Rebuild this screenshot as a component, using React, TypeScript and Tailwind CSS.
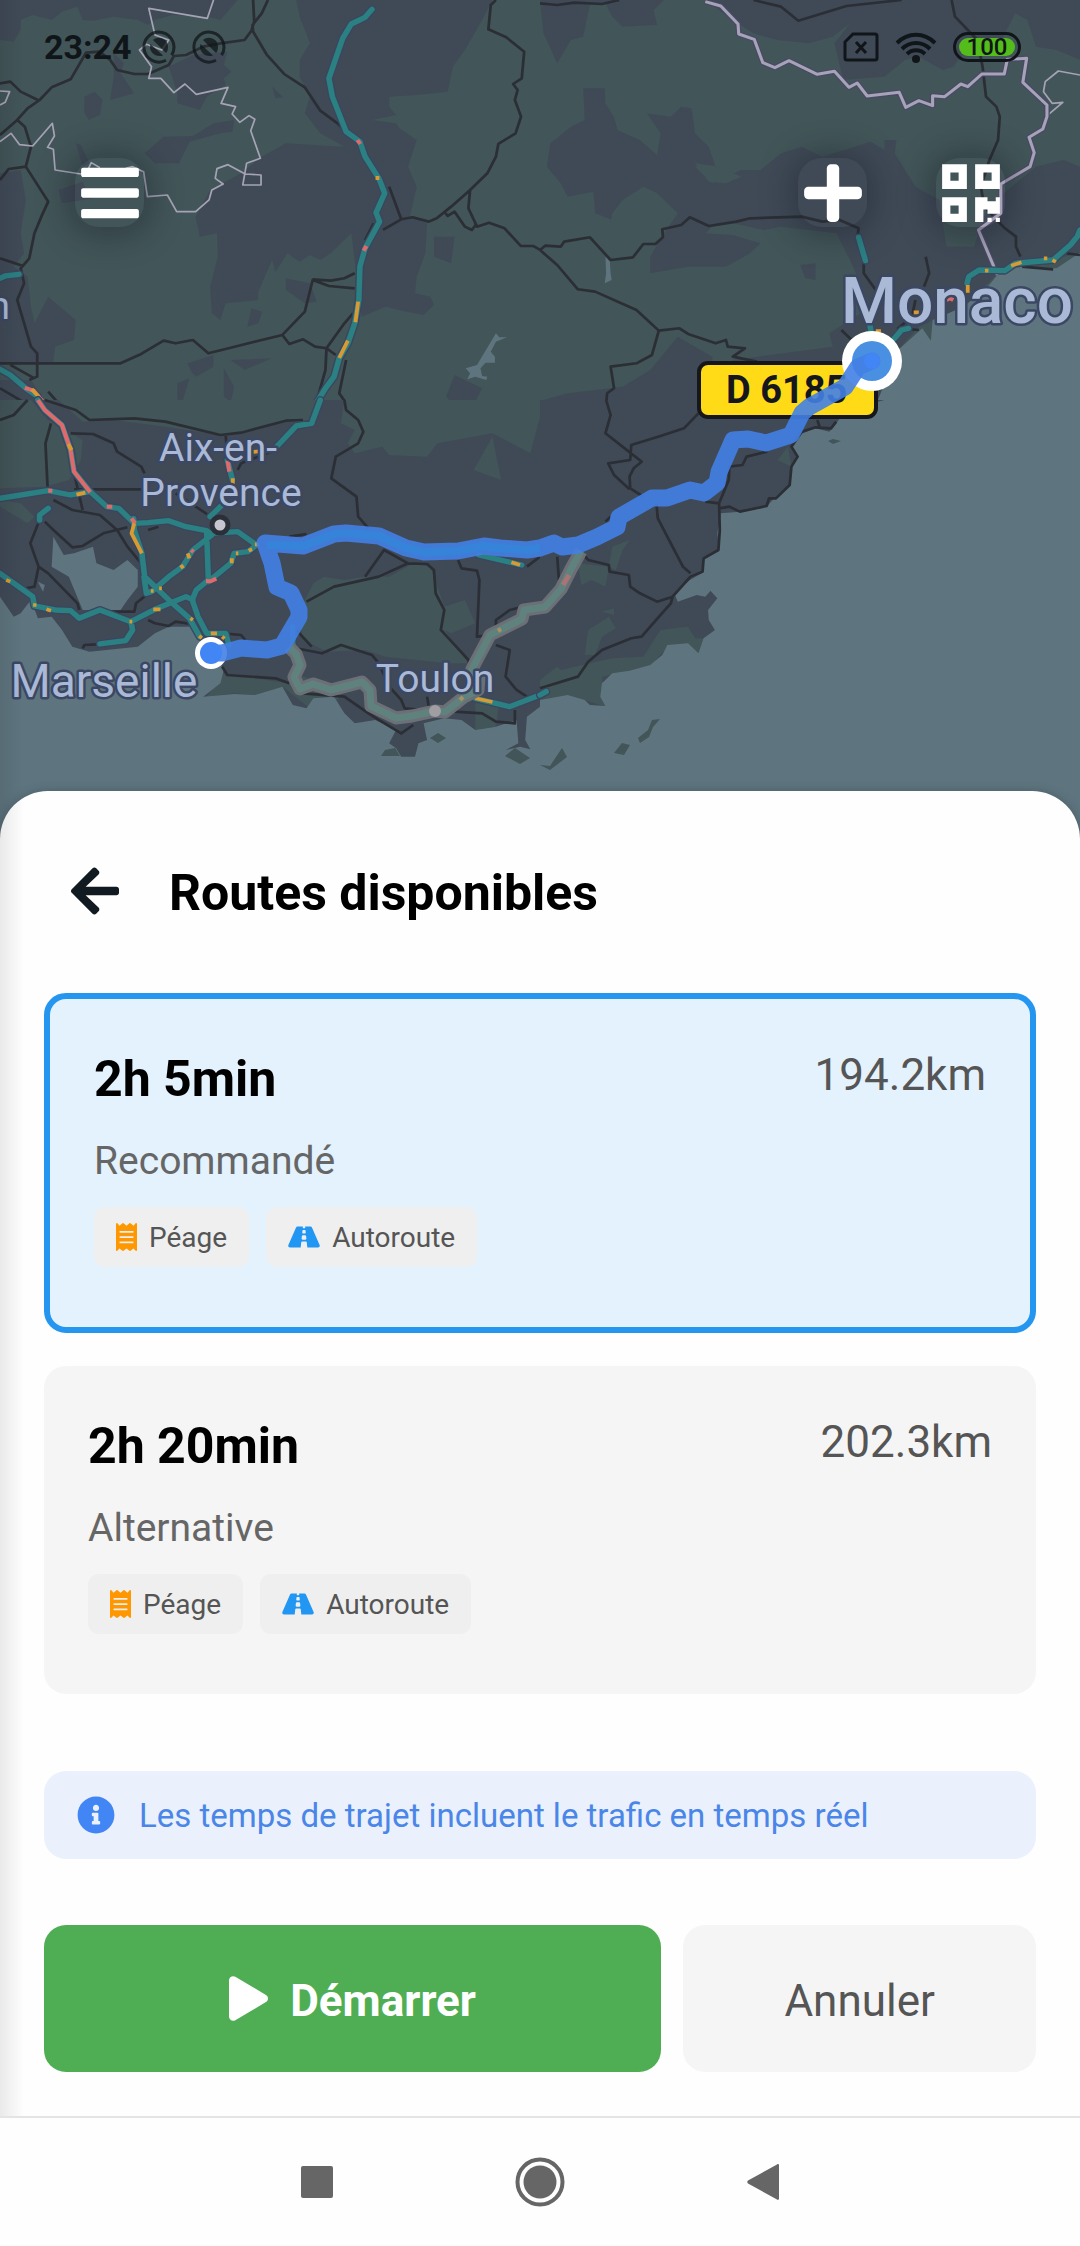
import React from "react";
import {
  FaArrowLeft,
  FaBars,
  FaInfoCircle,
  FaPlay,
  FaPlus,
  FaQrcode,
  FaReceipt,
  FaRoad,
} from "react-icons/fa";

type Route = { duration: string; distance: string; label: string };

const routes: Route[] = [
  { duration: "2h 5min", distance: "194.2km", label: "Recommandé" },
  { duration: "2h 20min", distance: "202.3km", label: "Alternative" },
];

const LAND = "#404a57";
const FOREST = "#425558";
const WATER = "#5e757f";
const ROAD = "#2b2f35";
const TEAL = "#2b8082";
const ORANGE = "#d99a33";
const RED = "#e0696c";
const BORDER = "#a5a3b5";

type TileProps = {
  x: number;
  y: number;
  base: string;
  height: number;
  forest?: string;
  land?: string;
  water?: string;
  roads: string;
  thin?: string;
  border?: string;
  traffic: string;
  slow: string;
  jam: string;
};

/* Each map tile covers 540 map units and is drawn on its own finer grid. */
function Tile(t: TileProps) {
  return (
    <g transform={`translate(${t.x} ${t.y}) scale(.3444 .3333)`} fill="none" strokeLinejoin="round">
      <rect width="1570" height={t.height} fill={t.base} />
      {t.land && <path d={t.land} fill={LAND} />}
      {t.forest && <path d={t.forest} fill={FOREST} />}
      {t.water && <path d={t.water} fill={WATER} />}
      <path d={t.roads} stroke={ROAD} strokeWidth="8" />
      {t.thin && <path d={t.thin} stroke={BORDER} strokeWidth="5" />}
      {t.border && <path d={t.border} stroke="#4a4869" strokeWidth="16" />}
      {t.border && <path d={t.border} stroke={BORDER} strokeWidth="9" />}
      <path d={t.traffic} stroke="#3a4660" strokeWidth="24" strokeLinecap="round" />
      <path d={t.traffic} stroke={TEAL} strokeWidth="16" strokeLinecap="round" />
      <path d={t.jam} stroke={RED} strokeWidth="12" />
      <path d={t.slow} stroke={ORANGE} strokeWidth="11" />
    </g>
  );
}

const mainRoute =
  "M215 653 222 653 241 648 267 650 282 646 299 617 299 610 291 593 277 587 272 563 265 543 303 546 334 534 346 533 379 536 406 548 424 552 458 551 484 546 500 548 527 550 540 548 554 543 562 547 578 545 597 537 617 527 619 517 652 498 667 498 690 490 704 493 717 483 719 472 733 440 748 439 766 443 791 435 802 413 809 407 845 387 858 367 872 361";
const altRoute =
  "M289 647 296 654 300 665 294 677 300 689 313 684 331 690 362 682 370 690 371 706 396 718 412 716 435 711 445 712 464 697 478 690 479 678 472 669 490 635 522 619 524 610 545 607 561 589 571 569 581 551";

function MapView() {
  return (
    <svg
      viewBox="0 0 1080 840"
      preserveAspectRatio="xMidYMin slice"
      className="absolute inset-0 h-full w-full"
      role="img"
      aria-label="Carte du trajet Marseille – Monaco"
    >
      <rect width="1080" height="840" fill={WATER} />
      <Tile
        x={0}
        y={0}
        height={1203}
        base={FOREST}
        land="M0 0H690L640 60 600 50 500 45 450 60 430 75 400 60 330 50 270 62 240 60 225 20 180 35 150 60 95 45 60 60 60 90 40 125 0 120Z M860 0H1430L1400 60 1350 150 1315 200 1300 275 1210 285 1130 290 1130 320 1150 345 1080 360 1150 370 1160 385 1210 420 1185 500 1210 560 1190 650 1240 670 1235 760 1210 830 1205 880 1250 890 1260 915 1230 945 1180 935 1120 920 1050 950 1020 700 960 760 930 780 900 765 870 785 835 760 800 815 790 780 750 875 750 900 655 910 640 960 615 940 610 860 632 770 630 700 580 710 568 650 610 570 700 520 760 470 830 430 1000 440 930 400 885 340 900 290 870 230 870 180 900 130 870 50Z M420 460 475 410 560 408 620 370 680 360 675 395 640 400 550 425 520 490 450 490Z M515 310V280L490 200 560 165 660 155 650 195 672 215 650 235 655 255 600 290 580 330Z M245 290 275 275 298 300 290 345 258 360 245 340Z M330 160 360 190 350 220 390 280 320 300 330 230Z M0 520 60 510 75 600 60 700 70 760 40 800 80 830 90 920 100 970 140 890 220 960 215 1020 160 1040 155 1085 0 1090Z M830 835 900 850 920 905 885 910 830 870Z M730 925 762 935 750 970 718 980Z M1260 710 1320 710 1310 790 1260 770Z M545 1090 620 1065 620 1100 570 1130 555 1115Z M670 1080 790 1075 710 1110Z M515 1150 550 1135 530 1205H515Z M650 1105 680 1160 670 1205 650 1190Z M1320 1125 1400 1165 1380 1205H1310L1295 1190Z M790 260 822 292 800 295Z M220 430 235 435 260 490 240 500Z M170 570 240 545 250 570 300 590 180 610Z M0 1140 90 1140 130 1203H0Z"
        water="M1440 1000 1450 1012 1472 1012 1440 1025 1425 1055 1437 1070 1437 1088 1410 1088 1395 1105 1400 1128 1415 1130 1412 1140 1380 1130 1357 1138 1365 1120 1352 1105 1385 1095Z"
        roads="M735 0 738 65 730 92M778 0 760 40 733 75 735 95 775 165 825 222 885 262 930 332 980 370 1010 400M730 92 710 120 640 130 590 140 540 165 505 168 490 195 430 222 390 222 340 210 320 180 290 155 250 158 205 238 150 262 115 300 80 325 50 360 0 405M0 250 30 245 60 275 110 300M50 360 72 380 90 440 75 500 140 605 120 650 100 700 85 775 60 805 70 850 50 900 90 1040 108 1060 108 1130 85 1140M0 540 25 507 75 500M0 775 65 797M0 1090H350L410 1062 475 1022 510 1030 560 1020 605 1060 690 1038 820 1005 885 935 908 840 955 858 1030 865M908 838 960 842 1000 835 1030 820M820 1005 840 1032 880 1018 915 1040 948 1045 975 1065M948 1045 945 1110 918 1210M948 1045 1000 970 1025 940M1005 1080 985 1180 1005 1210M1440 0 1425 15 1418 88 1470 112 1522 155 1515 235 1490 252 1503 270 1495 300 1513 350 1497 400 1447 432 1440 470 1415 520 1365 570 1310 620 1268 655 1245 665 1198 652 1165 658 1112 690M1165 658 1130 560M1085 670 1060 720M1365 570 1360 625 1385 680 1420 668 1465 685 1512 738 1548 738 1568 750M1290 635 1300 648 1320 635 1350 680 1370 690 1385 670M30 1095 100 1135M0 1165 75 1210M140 1175 170 1210"
        thin="M620 0 602 55 432 25 450 105 490 120 470 150 425 133 405 150 440 200 432 235 467 235 505 278 537 252 570 283 662 262 642 310 684 320 674 342 696 367 723 347 740 358 728 392 756 475 716 490 705 555 758 555 758 525 712 522 662 494 630 506 625 535 648 552 615 570 607 600 568 635 513 635 486 585 428 590 417 515 385 500 365 505M290 503 265 488 255 510 235 522 160 510 155 448 138 442 158 408 152 370 95 438 57 434 32 400 0 425M0 273 28 275 15 307 0 315"
        traffic="M1080 28 1060 52 1020 72 995 115 955 235 965 290 1005 395 1045 425 1060 470 1100 535 1117 580 1092 638 1102 665 1060 745 1045 800 1042 900 1030 970 1010 1030 985 1075 970 1130 945 1165 918 1210M0 1108 30 1125 75 1165 110 1190M0 835 15 828 55 823"
        slow="M1040 905 1032 967M1010 1022 985 1074M1096 528V540M92 1168 112 1190"
        jam="M1038 420 1046 432M1056 752 1064 738M72 1164 98 1172 128 1210"
      />
      <Tile
        x={540}
        y={0}
        height={1203}
        base={FOREST}
        land="M0 0 10 100 50 190 90 120 125 110 145 15 190 10 210 50 240 80 340 75 330 30 360 0Z M360 0H1568V180L1500 150 1440 140 1415 60 1380 40 1340 120 1300 150 1250 130 1200 200 1170 210 1100 170 1060 180 1000 230 880 240 855 130 900 70 850 110 780 130 690 120 620 100 560 60 480 0Z M125 265H188L190 310 215 350 225 390 290 420 340 465 350 400 310 340 380 350 410 320 440 325 450 400 490 440 510 500 450 500 500 550 585 510 640 510 700 460 760 440 820 470 960 425 1000 450 1000 420 1035 420 1030 460 1090 560 1160 600 1180 740 1260 740 1300 620 1440 500 1520 480 1568 500V760L1340 810 1230 920 1100 980 1040 1050 1000 1203H500L510 1130 560 1080 850 1040 840 1000 900 960 960 920 900 780 860 700 700 680 650 690 560 670 500 680 480 700 560 705 640 730 610 760 540 800 430 800 320 820 320 770 360 700 400 640 340 580 300 560 240 600 210 660 160 640 155 575 80 590 60 550 20 500 30 430 90 380 130 360Z M320 1110 400 1010 450 1040 500 1070 510 1203H0L80 1180 240 1160Z M755 795 800 790 800 840 770 835Z"
        forest="M80 610 120 590 155 640 200 690 210 640 240 600 290 650 300 720 270 760 200 780 130 700Z M450 490 520 500 585 530 540 550 490 545Z"
        water="M1568 758 1500 805 1400 800 1340 810 1300 860 1230 920 1140 960 1135 1022 1110 985 1040 1050 980 1203H1570Z M190 770 203 785 205 820 208 840 188 850 192 820Z"
        roads="M0 10 50 15 100 8 180 12 230 0M620 0 700 20 750 62 890 18 1050 0M1195 0 1205 50 1270 120 1285 200 1295 290 1325 320 1335 350 1330 420 1305 480 1280 560 1290 620 1350 685 1382 710 1382 740 1395 770M0 750 15 737 60 740 70 725 145 712 205 780 270 772 300 732 335 732 357 712 355 688 410 675 435 652 490 678 570 665 610 655 760 650 820 665 870 660 925 685 922 710M0 750 50 795 110 868 160 875 280 930 345 992 405 985 430 1002 510 1030 540 1020 545 1040 595 1045 560 1070 630 1085M345 992 325 1065 280 1090 205 1100 215 1165 195 1180 192 1210M940 790 940 820 975 870M1120 770 1130 820 1115 860M1400 800 1490 808M1530 760 1568 765M875 990 905 1020M1090 900 1080 950 1040 985 1100 990"
        thin="M1475 345 1518 307 1487 310 1462 275 1467 245 1505 213 1568 225"
        border="M480 5 525 18 575 72 577 102 622 118 647 188 682 203 723 182 805 223 855 214 897 262 921 249 950 288 1043 277 1062 322 1100 302 1140 317 1140 287 1175 290 1222 252 1242 260 1283 222 1348 222 1357 178 1413 175 1402 247 1472 315 1472 350 1460 387 1420 412 1435 458 1423 500 1338 552 1338 640 1273 690 1328 825"
        traffic="M925 712 945 782M955 955 962 1000M1025 1020 1050 990 1070 985M1240 850 1245 830 1275 810 1350 812 1380 790 1490 780 1540 735 1560 710 1568 690"
        slow="M1368 797 1398 787M1242 855V878M1463 775H1473M1488 780 1498 786M1292 812H1302M975 993H990M1085 937H1100"
        jam="M1180 900 1190 895 1200 900"
      />
      <Tile
        x={0}
        y={400}
        height={1200}
        base={LAND}
        forest="M170 0H920L900 70 830 65 700 100 640 105 480 80 330 60 240 65Z M0 0H90L140 60 240 120 235 180 200 240 130 260 0 265Z M1000 0H1568V50L1540 160 1430 100 1270 130 1240 170 1130 165 1110 140 1030 160 1010 130 1030 90 990 70Z M1430 110 1455 240 1375 210Z M885 600 910 550 940 530 1000 540 1060 530 1130 530 1200 490 1250 500 1290 620 1350 600 1380 670 1310 700 1290 690 1360 790 1300 790 1120 770 1060 750 950 755 880 720 870 660Z M0 300 60 310 100 350 80 370 0 320Z M600 890 650 820 720 830 830 850 850 820 1000 870 980 900 910 895 900 925 820 860 740 885 680 880Z M1380 910 1450 900 1440 980 1380 990Z M0 700 40 720 20 790 0 790Z"
        water="M0 590 40 650 60 640 90 600 110 655 150 650 180 690 210 740 260 755 400 740 450 700 490 680 555 680 600 720 650 810 640 850 590 890 680 882 740 885 820 860 850 915 890 925 910 895 970 890 1000 940 1030 970 1090 960 1150 990 1130 1030 1150 1045 1165 1070 1205 1070 1215 1030 1240 1020 1230 970 1290 955 1340 960 1380 990 1440 980 1500 960 1505 1030 1468 1050 1510 1040 1540 1048 1525 1020 1530 950 1568 920V1200H0Z M155 410 185 465 215 460 270 440 280 490 330 510 370 480 400 510 400 560 370 600 350 630 240 630 200 530 150 500Z M110 545 130 555 125 575Z"
        roads="M130 0 220 30 260 60 390 55 480 65 640 105 700 98 830 62 880 60M205 100 270 102 330 130 340 155 410 200 420 220M510 280 605 345M148 70 132 130 138 260M0 60 40 45 80 0M215 268H420M655 100 660 170M690 210 700 190 800 150M155 300 210 330 290 345 340 390 370 440 410 490M215 220 240 330M130 365 155 390 210 442 240 438 300 400 370 382M430 390 460 380M115 360 88 430 112 500 100 560 75 565M112 500 140 520 225 610 230 630M320 635 390 635 395 610 425 585M430 660 450 670 490 678 510 665 555 672M240 745 245 735 280 733M1000 0 1005 30 1040 60 1055 95 1040 130 975 170 962 235 1035 290 1040 350 1070 385M840 410 890 402M890 605 970 560 1100 530 1185 490 1115 450 1060 530M1185 490 1240 492 1260 510 1265 580 1290 630 1280 690 1360 780 1370 820M1330 480 1340 505 1385 512 1392 540 1385 710 1430 705M1530 500 1568 470M650 700 700 705 712 720M860 690 905 740M860 745 935 760 990 735 1080 765 1100 790 1130 860 1165 900 1175 925 1230 930M645 800 660 825 700 828 800 835 840 850M880 880 1000 890 1070 940 1100 960 1165 1000 1200 975M1240 890 1245 920M1440 735 1480 750 1468 830 1500 870 1530 890M1440 700 1440 660 1480 630 1520 620M1320 935 1400 940 1440 965 1495 970 1495 930"
        traffic="M930 0 905 70 860 78 805 138M110 0 130 30 180 75 205 150 215 215 262 275M0 295 140 272 205 285 262 275 310 320 345 325 390 370 430 368 490 362 540 380 600 392 610 400 690 395 745 435 720 455 680 460 670 490 605 545M388 355 390 390 412 460 420 530 490 600 550 655 580 710M425 580 418 530M0 520 95 590 100 618 160 630 205 632 230 655 290 630 380 665 450 628 540 590 560 600M380 665 385 690 365 722 290 732M600 400 605 540 570 570 558 600 575 650 600 700 655 700 665 735M615 405 560 450 530 500 490 530 440 575 425 580M645 315 610 350M660 180 675 240M1390 465 1515 495M1380 895 1480 920 1568 885M140 325 115 345 115 360M850 680 850 745"
        slow="M390 370 382 400 412 460M198 132 208 150M222 284 248 278M715 158 785 150M1485 487 1510 495M1380 895 1430 906M445 628H466M96 615H106M135 628 148 632M676 235V252M740 433H750M722 452 732 448M673 475V490M545 460 550 475M525 495 532 505M612 700H630M645 710 652 716M553 655 560 660M578 708 586 714M18 540 30 545M685 460H692M438 573H446M462 565H470M376 665H384"
        jam="M110 0 130 30 180 75 205 150 215 215 262 277M140 272H152M310 320H326M382 355 392 370M598 543 612 544 628 536M661 182 666 215M555 450 562 456"
      />
      <Tile
        x={540}
        y={400}
        height={1200}
        base={LAND}
        forest="M110 490 200 500 190 560 150 540 120 555Z M200 500 210 440 260 420 240 450 220 510Z M140 690 200 650 220 685 180 710 160 765 130 765Z M0 840 50 800 60 810 210 775 300 770 350 690 430 680 450 715 475 715 460 770 370 740 320 800 180 830 190 920 130 900 0 905Z M690 180 720 140 730 200Z M180 635 215 625 215 645Z"
        water="M0 900 80 885 130 900 145 915 190 918 175 890 180 850 210 820 260 812 320 795 355 765 370 735 430 730 460 760 475 715 508 690 490 660 488 630 515 595 495 572 480 590 455 585 400 605 390 580 435 540 470 520 475 480 520 450 515 400 525 340 580 335 660 318 680 295 725 255 730 200 750 170 730 140 750 105 800 85 840 95 860 70 890 30 1000 0H1570V1200H0Z"
        roads="M192 0 205 45 190 100 295 185 272 205 260 230 262 265 300 290M460 40 418 85 350 108 265 135 262 180 198 190 215 225 260 268M338 310 342 355 415 500 437 520M550 200 548 240 520 310 480 305M520 310 522 390 518 450 475 475 472 515 437 530 385 590 340 605 290 580 262 560 258 525 202 515 200 495 140 480 120 455M520 325 550 320 580 335 658 318 665 295 685 295 725 255 730 200 748 170 730 140 760 95 800 82 845 85 860 65M550 200 588 195 600 170 660 155M805 60 812 80M385 590 380 610 350 645 295 710 265 715 180 750 140 785 110 830 0 865M50 470 55 540M205 350 190 365"
        traffic="M0 885 18 875"
        slow=""
        jam=""
      />
      {/* Offshore islands */}
      <path
        d="M540 765 550 766 562 748 567 757 550 770ZM614 753 622 743 630 745 624 755ZM638 738 648 730 652 720 660 719 653 727 649 737 640 743ZM828 441 833 439 841 441 833 444ZM381 756 385 750 395 748 400 756ZM505 756 515 748 530 758 520 764ZM430 738 438 733 446 738 438 743Z"
        fill={FOREST}
      />

      <g fill="none" strokeLinejoin="round">
        <path d={altRoute} stroke="#6c7076" strokeWidth="13" />
        <path d={altRoute} stroke="#5f827f" strokeWidth="7" />
        <path d="M563 585 569 575" stroke="#a87474" strokeWidth="5" />
        <path d="M498 631 501 629M460 700 463 697" stroke="#a89060" strokeWidth="4" />
      </g>

      {/* Place names */}
      <g
        fontFamily="Roboto, sans-serif"
        fill="#a9b9d6"
        stroke="#3b4763"
        strokeWidth="5"
        strokeLinejoin="round"
        style={{ paintOrder: "stroke" }}
      >
        <text x="-11" y="319" fontSize="38">n</text>
        <text x="218" y="461" fontSize="39" textAnchor="middle">Aix-en-</text>
        <text x="221" y="506" fontSize="39" textAnchor="middle">Provence</text>
        <text x="104" y="697" fontSize="46" textAnchor="middle">Marseille</text>
        <text x="435" y="692" fontSize="39" textAnchor="middle">Toulon</text>
        <text x="957" y="323" fontSize="64" fontWeight="500" textAnchor="middle">Monaco</text>
      </g>

      <circle cx="220" cy="525" r="8" fill="#c4c5d0" stroke="#2b3038" strokeWidth="5" />
      <circle cx="435" cy="711" r="6" fill="#a09da3" />

      {/* Road shield */}
      <rect x="699" y="363" width="177" height="54" rx="9" fill="#ffdb17" stroke="#15171c" strokeWidth="4" />
      <text x="726" y="403" fontFamily="Roboto, sans-serif" fontSize="38" fontWeight="700" fill="#15171c">
        D 6185
      </text>

      <circle cx="211" cy="653" r="16" fill="#fff" />
      <circle cx="872" cy="361" r="30" fill="#fff" />
      <circle cx="872" cy="361" r="20" fill="#4a90e2" />
      <path
        d={mainRoute}
        fill="none"
        stroke="#4280e6"
        strokeWidth="17"
        strokeLinejoin="round"
        strokeLinecap="round"
        opacity=".9"
      />
      <path
        d="M267 545 303 546 334 534 346 533 379 536 406 548 424 552 458 551 484 546 500 548 527 550 540 548"
        fill="none"
        stroke="#3684da"
        strokeWidth="8"
        strokeLinejoin="round"
      />
      <circle cx="211" cy="653" r="11" fill="#4285f4" />
      <circle cx="872" cy="361" r="8" fill="#4285f4" />
    </svg>
  );
}

function ShutterIcon() {
  return (
    <svg viewBox="0 0 34 34" className="h-[34px] w-[34px]" fill="none" aria-hidden="true">
      <path d="M24 30.300A15 15 0 1 1 29.600 25.100" stroke="currentColor" strokeWidth="3" />
      <path d="M11 10c6-5 15-1 15 7 0 3-1 5-2 6Z" fill="currentColor" />
      <path d="M8.500 14 21 25.500C14 28 6 22 8.500 14Z" fill="currentColor" />
    </svg>
  );
}

function StatusBar() {
  return (
    <div className="flex items-center justify-between px-11 pt-6 text-[#101519]">
      <div className="flex items-center">
        <span className="text-[34px] leading-[46px] font-bold">23:24</span>
        <span className="ml-2.5 flex gap-4 opacity-75">
          <ShutterIcon />
          <ShutterIcon />
        </span>
      </div>
      <div className="mr-[15px] flex items-center gap-4">
        <svg viewBox="0 0 36 30" className="h-[30px] w-9" fill="none" stroke="currentColor" strokeWidth="3" aria-hidden="true">
          <path d="M10 2h22a2 2 0 0 1 2 2v22a2 2 0 0 1-2 2H4a2 2 0 0 1-2-2V10Z" />
          <path d="m13 10 10 11M23 10 13 21" />
        </svg>
        <svg viewBox="0 0 42 32" className="h-8 w-[42px]" fill="none" stroke="currentColor" strokeWidth="4" aria-hidden="true">
          <path d="M2 12C13 1 29 1 40 12M7 18c8-8 20-8 28 0M12 23c5-5 13-5 18 0" />
          <circle cx="21" cy="28" r="4" fill="currentColor" stroke="none" />
        </svg>
        <span className="flex h-[30px] w-[68px] items-center rounded-full border-[3px] border-current p-[3px]">
          <span className="flex h-full w-full items-center justify-center rounded-full bg-[#54bd1c] text-2xl leading-none font-medium">
            100
          </span>
        </span>
      </div>
    </div>
  );
}

function MapButton({ label, children }: { label: string; children: React.ReactNode }) {
  return (
    <button
      type="button"
      aria-label={label}
      className="flex h-[69px] w-[69px] items-center justify-center rounded-3xl text-white shadow-[0_2px_32px_6px_rgba(20,26,34,0.4)]"
    >
      {children}
    </button>
  );
}

function Badge({ icon, children }: { icon: React.ReactNode; children: React.ReactNode }) {
  return (
    <span className="flex h-[60px] items-center gap-3 rounded-[11px] bg-[#efefef] px-[22px] text-[28px] text-[#555]">
      {icon}
      <span className="pt-0.5">{children}</span>
    </span>
  );
}

function RouteCard({ route, selected, onSelect }: { route: Route; selected: boolean; onSelect: () => void }) {
  return (
    <button
      type="button"
      aria-pressed={selected}
      onClick={onSelect}
      className={
        selected
          ? "block w-full rounded-[22px] border-6 border-[#2496f0] bg-[#e3f2fd] p-11 text-left"
          : "block w-full rounded-[22px] bg-[#f5f5f5] p-11 text-left"
      }
    >
      <span className="flex items-start justify-between">
        <span className="text-[50px] leading-[72px] font-bold text-black">{route.duration}</span>
        <span className="text-[44px] leading-[64px] text-[#555]">{route.distance}</span>
      </span>
      <span className="mt-[18px] block text-[39px] leading-[56px] text-[#666]">{route.label}</span>
      <span className="mt-[18px] mb-4 flex gap-[17px]">
        <Badge icon={<FaReceipt className="h-7 w-[21px] text-[#ff9800]" />}>Péage</Badge>
        <Badge icon={<FaRoad className="h-7 w-8 text-[#2196f3]" />}>Autoroute</Badge>
      </span>
    </button>
  );
}

export default function App() {
  const [selected, setSelected] = React.useState(0);
  return (
    <div className="flex min-h-screen flex-col bg-[#fefefe] font-['Roboto',sans-serif]">
      <main className="relative flex flex-1 flex-col overflow-hidden">
        <section className="relative h-[839px] overflow-hidden">
          <MapView />
          <div className="relative">
            <StatusBar />
            <div className="mt-[88px] flex justify-between px-[75px]">
              <MapButton label="Menu">
                <FaBars className="h-[66px] w-[58px]" />
              </MapButton>
              <div className="flex gap-[69px]">
                <MapButton label="Ajouter">
                  <FaPlus className="h-[66px] w-[58px]" />
                </MapButton>
                <MapButton label="QR code">
                  <FaQrcode className="h-[66px] w-[58px]" />
                </MapButton>
              </div>
            </div>
          </div>
        </section>

        <section className="relative -mt-12 flex flex-1 flex-col rounded-t-[48px] bg-[#fefefe] px-11 pt-16 pb-11 shadow-[0_0_12px_rgba(0,0,0,0.2)]">
          <header className="flex items-center gap-[50px] pl-[27px]">
            <button type="button" aria-label="Retour" className="text-[#111a20]">
              <FaArrowLeft className="h-[68px] w-12" />
            </button>
            <h1 className="pt-1 text-[50px] leading-[68px] font-bold text-black">Routes disponibles</h1>
          </header>

          <div className="mt-[66px] flex flex-col gap-[33px]">
            {routes.map((route, i) => (
              <RouteCard key={route.label} route={route} selected={i === selected} onSelect={() => setSelected(i)} />
            ))}
          </div>

          <div className="mt-[77px] flex h-[88px] items-center gap-6 rounded-[22px] bg-[#eaf1fd] px-[33px]">
            <FaInfoCircle className="h-[38px] w-[38px] shrink-0 text-[#4285f4]" />
            <p className="pt-0.5 text-[33px] leading-[44px] text-[#4a86e8]">
              Les temps de trajet incluent le trafic en temps réel
            </p>
          </div>

          <div className="mt-[66px] grid grid-cols-[7fr_4fr] gap-[22px] text-[44px]">
            <button
              type="button"
              className="flex h-[147px] items-center justify-center gap-[22px] rounded-[22px] bg-[#4fae53] font-bold text-white"
            >
              <FaPlay className="h-[45px] w-[39px]" />
              <span className="pt-1">Démarrer</span>
            </button>
            <button type="button" className="h-[147px] rounded-[22px] bg-[#f5f5f5] pt-1 text-[#555]">
              Annuler
            </button>
          </div>
        </section>

        <div className="pointer-events-none absolute inset-y-0 left-0 w-6 bg-linear-to-r from-black/8 to-transparent" />
      </main>

      <nav className="flex h-[130px] items-center justify-center gap-[182px] border-t-2 border-[#e4e4e4] text-[#666]">
        <button type="button" aria-label="Applications récentes">
          <svg viewBox="0 0 32 32" className="h-8 w-8" fill="currentColor" aria-hidden="true">
            <rect width="32" height="32" rx="2" />
          </svg>
        </button>
        <button type="button" aria-label="Accueil">
          <svg viewBox="0 0 50 50" className="h-[50px] w-[50px]" fill="currentColor" aria-hidden="true">
            <circle cx="25" cy="25" r="16.5" />
            <circle cx="25" cy="25" r="22.5" fill="none" stroke="currentColor" strokeWidth="4" />
          </svg>
        </button>
        <button type="button" aria-label="Précédent">
          <svg viewBox="0 0 32 38" className="h-[38px] w-8" fill="currentColor" aria-hidden="true">
            <path d="M30 1.500c1-.8 2-.3 2 1v33c0 1.300-1 1.800-2 1L1 20.500c-1-1-1-2 0-3Z" />
          </svg>
        </button>
      </nav>
    </div>
  );
}
